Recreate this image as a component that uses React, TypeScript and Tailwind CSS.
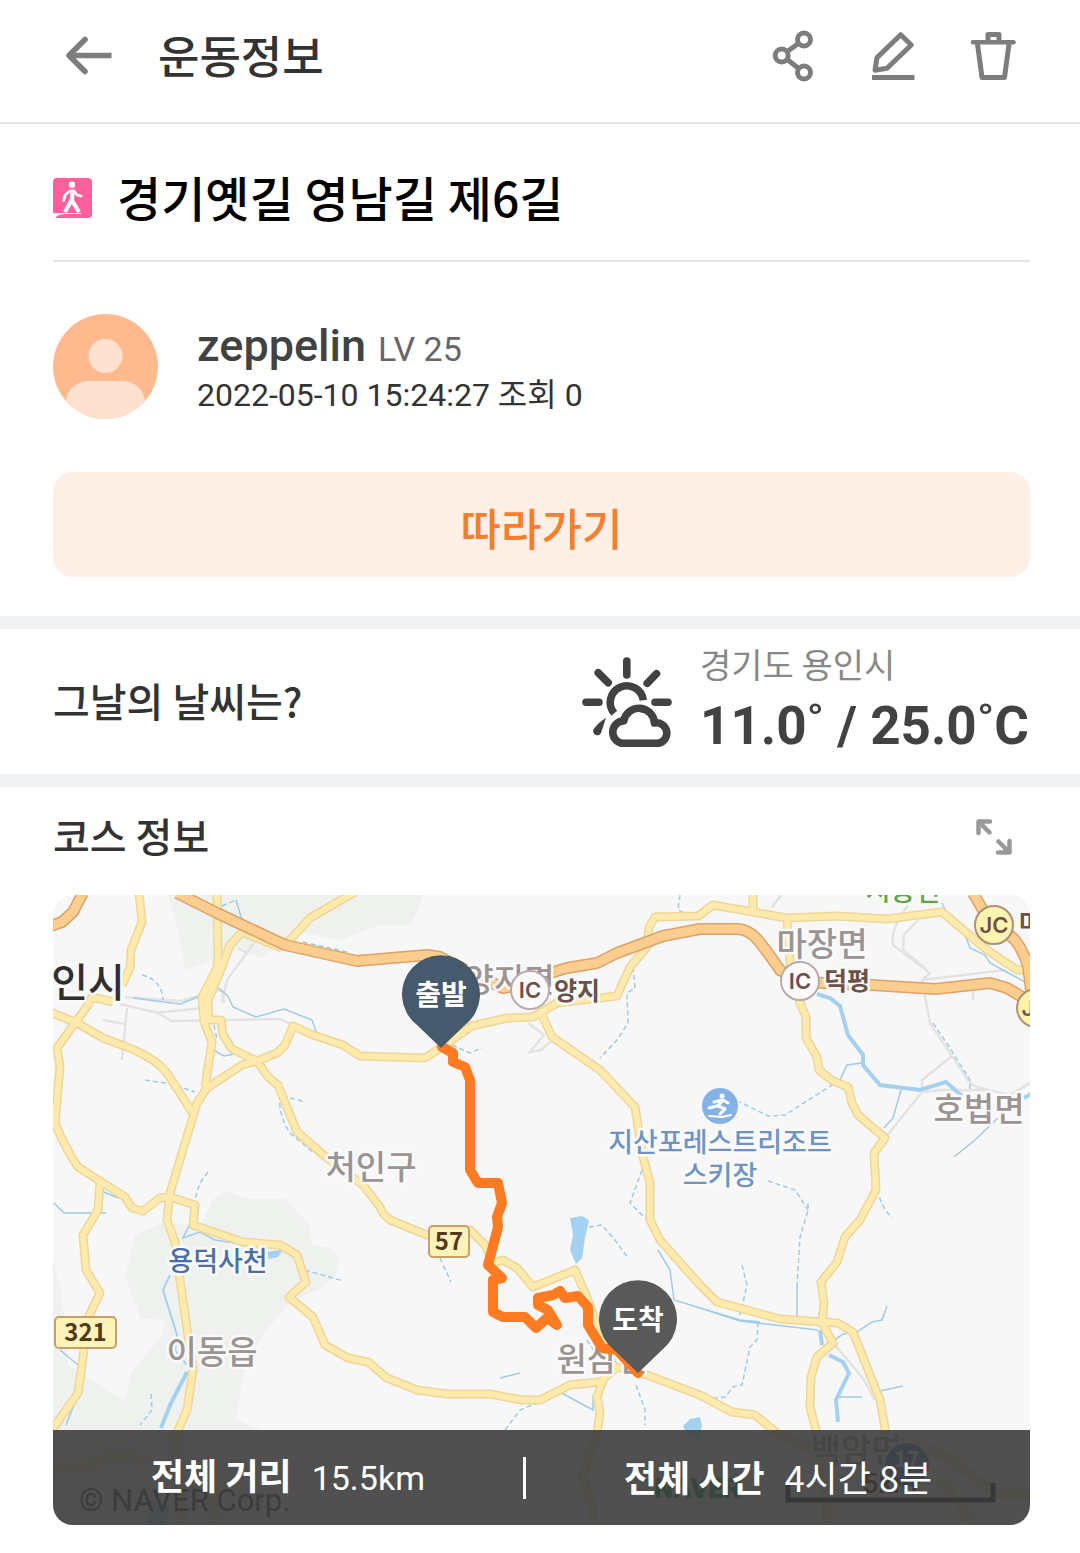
import React from 'react';

const MOTORWAYS = [
  'M177 893L217 913L285 945L357 961L380 959L427 955L440 957L470 972L503 988L525 984L550 973L567 968L597 963L617 953L663 936L700 929H738Q748 930 755 937Q762 944 780 970L800 982L872 985L935 989L990 983L1007 988L1034 1004',
  'M973 893L983 910L1015 940Q1023 950 1028 966L1031 990',
  'M83 893L73 912L62 922L48 927',
];

const ROADS = [
  'M139 893L142 922L131 950L130 968L122 985',
  'M217 893L218 957L217 968L202 997L204 1022L212 1042L205 1087',
  'M242 932L230 945L220 972L208 1000L209 1020H221L223 1035L232 1049L257 1061L268 1077L278 1085L297 1132L327 1158L363 1185L380 1207Q383 1215 390 1220L427 1235L449 1240L470 1230L485 1245L493 1263L503 1260L517 1268L533 1287L575 1270L587 1297L603 1343L614 1367',
  'M242 932L282 948',
  'M355 892L310 918L288 942',
  'M50 1012L77 1023L103 1038L127 1047Q155 1058 167 1073L192 1112',
  'M113 1002L92 997L88 1005L57 1048L60 1067L55 1123Q65 1148 78 1167L125 1197L132 1208L143 1211L160 1198L170 1197L195 1205L193 1225L243 1242L280 1245L297 1255L306 1282L289 1297L313 1317L325 1345L348 1358L368 1362L387 1378L417 1390L447 1394H490L522 1400H540L570 1385L600 1382L617 1367L647 1375L700 1395L732 1412L755 1415L777 1433L810 1448L907 1443L940 1453L997 1493L1034 1495',
  'M50 1118L55 1126',
  'M257 1061L277 1053L285 1045L293 1026L313 1035L343 1045L360 1056L425 1058L442 1047L472 1026L507 1018L533 1017L557 1003L617 996L630 967L647 947L649 927L655 917L698 916L713 905L787 918L837 916L887 919L942 912L987 950L1017 970H1028',
  'M257 1061L242 1065L207 1088L197 1103L170 1193L167 1220L175 1242L180 1280L193 1370L187 1410L175 1437L177 1463L182 1525',
  'M100 1183L98 1210L83 1235L86 1270L100 1293L87 1320L83 1357L78 1393L52 1430',
  'M50 1470L83 1467L113 1455L147 1460L180 1480L213 1490L217 1525',
  'M542 1015L552 1037L600 1070L635 1107L642 1153L650 1183V1220L660 1240L700 1285L717 1302L780 1319L838 1323L853 1332L880 1400L886 1434',
  'M753 893V910',
  'M787 920L790 962L800 1003L806 1017V1038L817 1057L819 1070L833 1081L848 1087L852 1103L858 1115L885 1138L874 1153L876 1190L860 1220L845 1237L837 1262L821 1282L824 1303L822 1323L833 1343L817 1357L811 1377L810 1407L816 1430L825 1470L828 1525',
  'M603 1380L597 1397L600 1413L597 1433L582 1477L592 1503L593 1525',
  'M940 1480L975 1525',
];

const MINOR_ROADS = [
  'M125 997L180 1001L222 990L224 1003',
  'M120 1004L158 1013L171 1021L280 1019L290 1024',
  'M155 1013L203 1008',
  'M127 1008L122 1060M103 1020L124 1024',
  'M256 940L227 980L222 1002M238 948L248 954',
  'M783 893L772 907',
  'M908 905Q890 930 893 945L930 973L922 980L930 1023L970 1083L980 1088L1010 1095L1030 1083',
  'M918 920L904 935L903 950L925 968',
  'M952 1056L922 1080V1092L885 1138M922 1092L940 1090H990',
  'M922 980L1005 970M973 985V1000',
  'M528 1023L544 1035L530 1052L541 1050L552 1040',
  'M833 1343L862 1377L875 1400',
];

const STREAMS = [
  'M236 900L242 920M218 988L228 996L233 1007L256 1017L284 1009L312 1020L317 1034',
  'M133 998L180 1004L198 997M213 1050L224 1056L234 1054',
  'M54 1203L64 1213H106M104 1192L118 1198',
  'M190 1224L183 1238L200 1232L215 1240L243 1244',
  'M60 1350L78 1365M66 1425L76 1400',
  'M942 903L950 920L965 935L970 948L985 955L990 963L1003 970L1025 982',
  'M901 1090L893 1118L884 1128M862 1063L847 1065L840 1080',
  'M998 1118L975 1140L954 1157M797 1320V1287',
  'M500 1378L520 1373M556 1390L593 1410V1395',
  'M658 1250L670 1270L674 1300L700 1308L740 1320L760 1322M700 1308L740 1321L818 1330',
  'M835 1340L843 1334L857 1332L872 1322L882 1320L887 1306',
  'M838 1397H862M880 1391L903 1386',
];

const DASHED_STREAMS = [
  'M142 975Q162 980 163 1000M222 906L236 900M303 942L347 952M145 1080L172 1084L195 1092M290 1098L305 1102',
  'M280 1095Q278 1115 290 1133L314 1153M208 1172L200 1183L194 1202M214 1025L217 1040',
  'M151 1394L152 1410L140 1425M305 1270L343 1281M452 1045L470 1053L482 1048M440 1258L451 1282',
  'M680 895L678 910L700 920M633 967L635 988L627 993L628 1023L617 1040L600 1058',
  'M642 1170L630 1203L647 1220M797 1287L800 1237L808 1210V1200',
  'M840 1080L813 1097L785 1115L768 1116L740 1102M876 1190L885 1210L892 1218',
  'M589 1227L602 1225L615 1240L628 1258M768 1181L795 1190L808 1210M505 1430L520 1410L545 1400',
  'M758 1322L757 1340L750 1347L742 1385L733 1387L725 1397L700 1400M742 1265L747 1285L740 1315',
  'M933 1023L948 1045L970 1080V1090M636 1385L645 1410V1425M587 1340L600 1360',
];

const RIVERS = [
  'M817 994L830 998L840 1006L848 1035L863 1055V1065L880 1085L920 1090L946 1082L962 1096',
  'M829 1355L843 1362L849 1373L836 1400L838 1422',
  'M187 1372L170 1405L161 1428',
  'M820 1330L822 1345M1024 1098L1031 1094',
];

const ROUTE =
  'M442 1047L453 1053V1062L465 1067L470 1080V1170L478 1183H498L502 1203L497 1217L498 1227L488 1265L502 1278L493 1280V1312L503 1317H525L536 1328L547 1318L557 1325L548 1310L538 1305V1298L553 1295L560 1291L565 1298L578 1296L588 1307V1325L602 1348L617 1350L638 1373';

interface PinProps {
  x: number;
  y: number;
  fill: string;
  label: string;
}

function Pin({ x, y, fill, label }: PinProps) {
  return (
    <g transform={`translate(${x} ${y})`}>
      <path d="M0 0L-24 -23A39 39 0 1 1 24 -23Z" fill={fill} />
      <text y="-43" textAnchor="middle" className="fill-white text-[28px] font-bold">
        {label}
      </text>
    </g>
  );
}

interface PlaceProps {
  x: number;
  y: number;
  className: string;
  children: React.ReactNode;
}

// Place name with a light halo so it stays readable over the roads
function Place({ x, y, className, children }: PlaceProps) {
  return (
    <text
      x={x}
      y={y}
      textAnchor="middle"
      stroke="#fafafa"
      strokeWidth="5"
      strokeLinejoin="round"
      paintOrder="stroke"
      className={className}
    >
      {children}
    </text>
  );
}

interface JunctionProps {
  x: number;
  y: number;
  label: string;
  fill: string;
  stroke: string;
}

function Junction({ x, y, label, fill, stroke }: JunctionProps) {
  return (
    <g>
      <circle cx={x} cy={y} r="19" fill={fill} stroke={stroke} strokeWidth="2" />
      <text x={x} y={y + 8} textAnchor="middle" className="fill-[#6b5147] font-[Inter] text-[22px] font-semibold">
        {label}
      </text>
    </g>
  );
}

function RoadNumber({ x, y, width, label }: { x: number; y: number; width: number; label: string }) {
  return (
    <g>
      <rect x={x} y={y} width={width} height="31" rx="4" fill="#fff3b8" stroke="#c9a06c" strokeWidth="2" />
      <text x={x + width / 2} y={y + 24} textAnchor="middle" className="fill-[#54391f] text-[24px] font-bold">
        {label}
      </text>
    </g>
  );
}

function CourseMap() {
  return (
    <svg
      viewBox="53 895 977 630"
      preserveAspectRatio="xMidYMid slice"
      role="img"
      aria-label="코스 지도"
      className="block w-full"
    >
      <rect x="53" y="895" width="977" height="630" fill="#f7f7f7" />
      <g fill="#eef1ed">
        <path d="M168 895H424L411 925L380 925L340 940L300 932L262 958L240 950L185 970L178 930Z" />
        <path d="M212 1200L226 1191L245 1198L285 1199L310 1225L312 1245L330 1248L340 1260L336 1275L318 1290L290 1302L265 1332L245 1365L236 1420L262 1430V1525H53V1330L66 1345L68 1365L125 1401L130 1375L162 1335L165 1320L140 1318L125 1275L135 1235L165 1222L200 1228Z" />
        <path d="M53 1260L60 1285L66 1330L53 1330Z" />
      </g>
      <g fill="#a5d1f1">
        <path d="M570 1218L582 1216L589 1220L585 1238L582 1258L576 1264L570 1250L573 1235Z" />
        <path d="M683 1426L690 1419L700 1417L702 1426L698 1440L688 1436Z" />
        <path d="M268 1252L284 1249L278 1257L268 1259ZM150 1500L170 1505L165 1525H148Z" />
      </g>
      <g fill="none" stroke="#e3e3e1" strokeWidth="2.5">
        {MINOR_ROADS.map((d) => (
          <path key={d} d={d} />
        ))}
      </g>
      <g fill="none" stroke="#9fcbea" strokeWidth="1.5">
        {STREAMS.map((d) => (
          <path key={d} d={d} />
        ))}
        <g strokeDasharray="5 3">
          {DASHED_STREAMS.map((d) => (
            <path key={d} d={d} />
          ))}
        </g>
      </g>
      <g fill="none" stroke="#a5d1f1" strokeWidth="4">
        {RIVERS.map((d) => (
          <path key={d} d={d} />
        ))}
        <path d="M170 1275L163 1290L177 1335L175 1350L187 1365" strokeWidth="2" />
      </g>
      <g fill="none" strokeLinejoin="round">
        <g stroke="#efd698" strokeWidth="9">
          {ROADS.map((d) => (
            <path key={d} d={d} />
          ))}
        </g>
        <g stroke="#feeaad" strokeWidth="6">
          {ROADS.map((d) => (
            <path key={d} d={d} />
          ))}
        </g>
        <g stroke="#dfa168" strokeWidth="12">
          {MOTORWAYS.map((d) => (
            <path key={d} d={d} />
          ))}
        </g>
        <g stroke="#fbce90" strokeWidth="9">
          {MOTORWAYS.map((d) => (
            <path key={d} d={d} />
          ))}
        </g>
      </g>

      <Place x={88} y={997} className="fill-[#2f2f2f] text-[40px] font-medium">인시</Place>
      <Place x={509} y={992} className="fill-[#9b9493] text-[33px] font-medium">양지면</Place>
      <Place x={822} y={956} className="fill-[#9b9493] text-[33px] font-medium">마장면</Place>
      <Place x={979} y={1121} className="fill-[#9b9493] text-[33px] font-medium">호법면</Place>
      <Place x={371} y={1179} className="fill-[#9b9493] text-[33px] font-medium">처인구</Place>
      <Place x={212} y={1364} className="fill-[#9b9493] text-[33px] font-medium">이동읍</Place>
      <Place x={602} y={1371} className="fill-[#9b9493] text-[33px] font-medium">원삼면</Place>
      <Place x={856} y={1462} className="fill-[#9b9493] text-[33px] font-medium">백암면</Place>
      <Place x={218} y={1271} className="fill-[#4c6ea5] text-[27px] font-medium">용덕사천</Place>
      <Place x={720} y={1152} className="fill-[#6f93c4] text-[27px] font-medium">지산포레스트리조트</Place>
      <Place x={720} y={1185} className="fill-[#6f93c4] text-[27px] font-medium">스키장</Place>
      <Place x={903} y={901} className="fill-[#5aa544] text-[27px] font-medium">시몽면</Place>
      <Place x={577} y={1000} className="fill-[#6b5147] text-[25px] font-bold">양지</Place>
      <Place x={847} y={990} className="fill-[#6b5147] text-[25px] font-bold">덕평</Place>
      <Place x={1042} y={932} className="fill-[#6b5147] text-[25px] font-bold">마장</Place>

      <Junction x={530} y={990} label="IC" fill="#fbf9f9" stroke="#b9abab" />
      <Junction x={800} y={981} label="IC" fill="#fbf9f9" stroke="#b9abab" />
      <Junction x={994} y={925} label="JC" fill="#fff3b0" stroke="#b08f78" />
      <Junction x={1036} y={1008} label="JC" fill="#fff3b0" stroke="#b08f78" />
      <RoadNumber x={429} y={1226} width={40} label="57" />
      <RoadNumber x={55} y={1317} width={61} label="321" />

      <circle cx="720" cy="1106" r="18" fill="#83b1e8" />
      <g fill="none" stroke="#fff" strokeWidth="3" strokeLinecap="round" strokeLinejoin="round">
        <path d="M723 1100L718 1106L725 1109L720 1114M723 1100L714 1102M723 1100L728 1103M709 1108L717 1106" />
        <path d="M709 1116L722 1117L731 1115" strokeWidth="2" />
      </g>
      <circle cx="722" cy="1096" r="2.5" fill="#fff" />

      <text x="79" y="1511" className="fill-[#333] font-[Roboto] text-[31px]">© NAVER Corp.</text>
      <rect x="642" y="1468" width="120" height="41" rx="18" fill="#f1f1f1" />
      <text x="654" y="1498" className="fill-[#008c2e] font-[Roboto] text-[27px] font-black">NAVER</text>
      <circle cx="907" cy="1465" r="23" fill="#4c6fc0" stroke="#fff" strokeWidth="2" />
      <text x="907" y="1467" textAnchor="middle" className="fill-white text-[22px] font-bold">17</text>
      <text x="890" y="1493" textAnchor="middle" className="fill-[#222] font-[Roboto] text-[28px] font-medium">5km</text>
      <path d="M788 1483V1500H993V1483" fill="none" stroke="#111" strokeWidth="5" />

      <path d={ROUTE} fill="none" stroke="#ff7b22" strokeWidth="10" strokeLinecap="round" strokeLinejoin="round" />
      <Pin x={638} y={1373} fill="#595959" label="도착" />
      <Pin x={441} y={1048} fill="#455a6d" label="출발" />
    </svg>
  );
}

function WeatherIcon() {
  return (
    <svg width="90" height="90" viewBox="0 0 90 90" fill="none" stroke="#424242" strokeWidth="7.6" aria-hidden="true">
      <path
        d="M44.8 4V18M74.5 16.7L65.2 26.3M16.2 15.7L26.2 25.7M4 45.3H17M73 45.3H86"
        strokeLinecap="round"
      />
      <path d="M32.3 56.3A16.6 16.6 0 1 1 61.3 43.3" />
      <path d="M39.5 86.2A11.3 11.3 0 0 1 41.8 63.9A15.5 15.5 0 0 1 72.5 66A10.2 10.2 0 0 1 76.5 86.2Z" strokeLinejoin="round" />
      <path d="M24 60.7L19.5 74.5A4.2 4.2 0 1 1 12 71.5Q17 65 24 60.7Z" fill="#424242" stroke="none" />
    </svg>
  );
}

export default function App() {
  return (
    <div className="min-h-screen bg-white font-['Noto_Sans_CJK_KR',sans-serif] text-[#333]">
      <header className="flex h-[124px] items-center border-b-2 border-[#e5e5e5] pr-[37px] pb-[10px] pl-16 text-[#7d7d7d]">
        <button type="button" aria-label="뒤로">
          <svg width="52" height="52" viewBox="0 0 52 52" fill="none" stroke="currentColor" strokeWidth="5.5" strokeLinejoin="round">
            <path d="M47.5 25.5H5" />
            <path d="M21 9.5L5 25.5L21 41.5" strokeLinecap="round" />
          </svg>
        </button>
        <h1 className="ml-[42px] grow pb-1 text-[45px] leading-none font-medium text-[#333]">운동정보</h1>
        <button type="button" aria-label="공유" className="flex w-[100px] justify-center">
          <svg width="52" height="52" viewBox="0 0 52 52" fill="none" stroke="currentColor" strokeWidth="5">
            <circle cx="37" cy="9.5" r="6.5" />
            <circle cx="14.7" cy="25.5" r="6.5" />
            <circle cx="37" cy="42.5" r="6.5" />
            <path d="M20 21.7L31.7 13.3M20 29.3L31.7 38.5" />
          </svg>
        </button>
        <button type="button" aria-label="수정" className="flex w-[100px] justify-center">
          <svg width="52" height="52" viewBox="0 0 52 52" fill="none" stroke="currentColor" strokeWidth="5" strokeLinejoin="round">
            <path d="M33.7 4.7L44.3 15L20 38.3L8 40.3L10 27.6Z" />
            <path d="M5 47.5H47.5" />
          </svg>
        </button>
        <button type="button" aria-label="삭제" className="flex w-[100px] justify-center">
          <svg width="52" height="52" viewBox="0 0 52 52" fill="none" stroke="currentColor" strokeWidth="5" strokeLinejoin="round">
            <path d="M6 12.3H46.5" strokeLinecap="round" strokeWidth="4.5" />
            <path d="M21 12V4.5H32V12M10.5 14L15 47.5H37.5L42 14" />
          </svg>
        </button>
      </header>

      <main>
        <section className="pr-[50px] pb-[39px] pl-[53px]">
          <div className="flex h-[138px] items-center gap-[25px] border-b-2 border-[#e5e5e5] pt-3">
            <svg width="39" height="40" viewBox="0 0 39 40" role="img" aria-label="걷기">
              <rect width="39" height="40" rx="4" fill="#ff5f9b" />
              <circle cx="19" cy="6.7" r="3.2" fill="#fff" />
              <path
                d="M19.5 14.5L19 22.5L26 34M18.5 22L12 34"
                fill="none"
                stroke="#fff"
                strokeWidth="4"
                strokeLinejoin="round"
              />
              <path
                d="M10.5 22.5L12.5 16.5L17 13H21L24 17L28 18"
                fill="none"
                stroke="#fff"
                strokeWidth="2.8"
                strokeLinecap="round"
                strokeLinejoin="round"
              />
              <path d="M0 35H28V36H13Q5 36 2 40H0Z" fill="#fff" />
            </svg>
            <h2 className="pb-1 text-[48px] leading-none font-medium text-black">경기옛길 영남길 제6길</h2>
          </div>

          <div className="mt-[52px] flex items-center gap-[39px]">
            <svg width="105" height="105" viewBox="0 0 105 105" className="rounded-full bg-[#ffb98f]" aria-hidden="true">
              <circle cx="52.5" cy="42" r="17" fill="#ffe1d0" />
              <rect x="13" y="67" width="79" height="60" rx="22" fill="#ffe1d0" />
            </svg>
            <div className="font-[Roboto,'Noto_Sans_CJK_KR',sans-serif]">
              <p className="flex items-baseline gap-3 leading-[54px]">
                <span className="text-[45px] font-medium text-[#424242]">zeppelin</span>
                <span className="text-[34px] text-[#666]">LV 25</span>
              </p>
              <p className="text-[32px] leading-[38px]">2022-05-10 15:24:27 조회 0</p>
            </div>
          </div>

          <button
            type="button"
            className="mt-[53px] block h-[105px] w-full rounded-[20px] bg-[#fff0e7] pt-1 text-[44px] leading-none font-medium text-[#f97d2b]"
          >
            따라가기
          </button>
        </section>

        <section className="flex items-center justify-between border-y-[13px] border-[#f1f2f4] pr-[51px] pl-[53px]">
          <h2 className="pb-1 text-[40px] leading-none font-medium">그날의 날씨는?</h2>
          <div className="flex h-[145px] items-center gap-7">
            <WeatherIcon />
            <div>
              <p className="text-[34px] leading-[48px] text-[#888]">경기도 용인시</p>
              <p className="font-[Roboto] text-[53px] leading-[76px] font-bold text-[#424242]">11.0˚ / 25.0˚C</p>
            </div>
          </div>
        </section>

        <section className="pr-[50px] pb-7 pl-[53px]">
          <div className="flex h-[108px] items-center justify-between pb-2">
            <h2 className="pb-1 text-[40px] leading-none font-medium">코스 정보</h2>
            <button type="button" aria-label="지도 확대" className="mr-[18px] text-[#999]">
              <svg width="36" height="36" viewBox="0 0 36 36" fill="none" stroke="currentColor" strokeWidth="4.5" strokeLinecap="round" strokeLinejoin="round">
                <path d="M14 2.5H2.5V14M3 3L13.5 13.5M33.5 22V33.5H22M33 33L22.5 22.5" />
              </svg>
            </button>
          </div>
          <div className="relative overflow-hidden rounded-[20px]">
            <CourseMap />
            <dl className="absolute inset-x-0 bottom-0 flex h-[95px] items-center bg-[#3d3d3d]/90 leading-none text-white">
              <div className="flex grow items-baseline justify-center gap-5 pb-1">
                <dt className="text-[36px] font-bold">전체 거리</dt>
                <dd className="font-[Roboto,'Noto_Sans_CJK_KR',sans-serif] text-[34px]">15.5km</dd>
              </div>
              <div className="h-[42px] w-[3px] bg-white" />
              <div className="flex grow items-baseline justify-center gap-5 pb-1">
                <dt className="text-[36px] font-bold">전체 시간</dt>
                <dd className="font-['Noto_Sans_CJK_KR',sans-serif] text-[36px]">4시간 8분</dd>
              </div>
            </dl>
          </div>
        </section>
      </main>
    </div>
  );
}
